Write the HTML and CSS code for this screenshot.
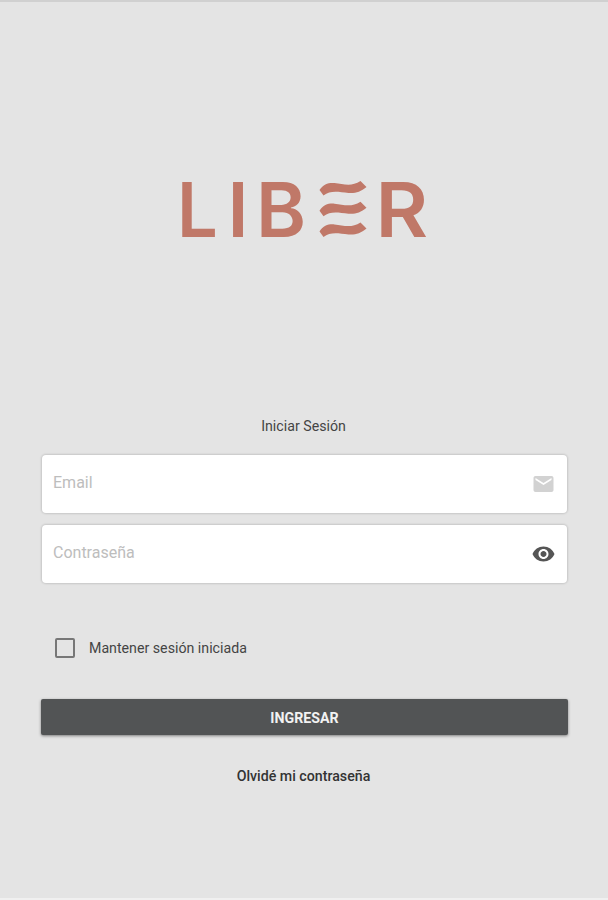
FILE: index.html
```html
<!DOCTYPE html>
<html lang="es">
<head>
  <meta charset="UTF-8" />
  <meta name="viewport" content="width=device-width, initial-scale=1.0" />
  <title>Liber - Iniciar Sesión</title>
  <link rel="stylesheet" href="styles.css">
</head>
<body>
  <main class="login">
    <div class="logo">
      <svg width="264" height="104" viewBox="-6.500 -20 264 104" role="img" aria-label="LIBER">
        <text class="logo-text" transform="translate(-1.500 59.500) scale(0.950 1)">L</text>
        <text class="logo-text" y="59.500" x="49 77.500">IB</text>
        <text class="logo-text" transform="translate(197 59.500) scale(1.060 1)">R</text>
        <g class="logo-waves">
          <path d="M141 13C145 7 150 5.500 156 6C165 7 173 10 182 4L188 10C182 15 177 16.500 170 16C160 15 152 13 145 18.500Z" />
          <path d="M141 33.700C145 27.700 150 26.200 156 26.700C165 27.700 173 30.700 182 24.700L188 30.700C182 35.700 177 37.200 170 36.700C160 35.700 152 33.700 145 39.200Z" />
          <path d="M141 54.400C145 48.400 150 46.900 156 47.400C165 48.400 173 51.400 182 45.400L188 51.400C182 56.400 177 57.900 170 57.400C160 56.400 152 54.400 145 59.900Z" />
        </g>
      </svg>
    </div>

    <form class="login-form">
      <h1 class="form-title">Iniciar Sesión</h1>

      <label class="field">
        <input type="email" placeholder="Email">
        <svg class="icon icon-mail" viewBox="0 0 24 24">
          <path d="M20 4H4c-1.100 0-2 .9-2 2v12c0 1.100.9 2 2 2h16c1.100 0 2-.9 2-2V6c0-1.100-.9-2-2-2zm0 4l-8 5-8-5V6l8 5 8-5v2z" />
        </svg>
      </label>

      <label class="field">
        <input type="password" placeholder="Contraseña">
        <svg class="icon icon-eye" viewBox="0 0 24 24">
          <path d="M12 4.500C7 4.500 2.730 7.610 1 12c1.730 4.390 6 7.500 11 7.500s9.270-3.110 11-7.500c-1.730-4.390-6-7.500-11-7.500zM12 17c-2.760 0-5-2.240-5-5s2.240-5 5-5 5 2.240 5 5-2.240 5-5 5zm0-8c-1.660 0-3 1.340-3 3s1.340 3 3 3 3-1.340 3-3-1.340-3-3-3z" />
        </svg>
      </label>

      <label class="remember">
        <input type="checkbox">
        <span>Mantener sesión iniciada</span>
      </label>

      <button type="button" class="submit-button">INGRESAR</button>
      <a href="#" class="forgot-link">Olvidé mi contraseña</a>
    </form>
  </main>
</body>
</html>
```

FILE: styles.css
```css
* {
  margin: 0;
  padding: 0;
  box-sizing: border-box;
}

body {
  font-family: Roboto, "Liberation Sans", sans-serif;
  background: #e4e4e4;
  color: #444;
}

.login {
  height: 900px;
  padding: 0 41px 0 40px;
  border-top: 2px solid #d0d0d0;
  border-bottom: 2px solid #f0f0f0;
}

.logo {
  display: flex;
  justify-content: center;
  padding-top: 155px;
}

.logo-text {
  font-family: Inter, sans-serif;
  font-size: 76px;
  font-weight: 600;
  fill: #c07868;
}

.logo-waves {
  fill: #c07868;
}

.login-form {
  display: flex;
  flex-direction: column;
  margin-top: 155px;
}

.form-title {
  font-size: 14.2px;
  line-height: 20px;
  font-weight: 400;
  text-align: center;
  margin-bottom: 19px;
}

.field {
  display: flex;
  align-items: center;
  height: 58px;
  margin: 0 0 12px 2px;
  padding: 0 11px;
  background: #fff;
  border-radius: 4px;
  box-shadow: 0 0 2px 1px rgba(0, 0, 0, 0.13);
}

.field input {
  flex: 1;
  border: none;
  outline: none;
  background: none;
  font-family: inherit;
  font-size: 16px;
  padding-bottom: 3px;
}

.field input::placeholder {
  color: #bdbdbd;
}

.icon {
  width: 25px;
  height: 24px;
}

.icon-mail {
  fill: #d2d2d2;
}

.icon-eye {
  fill: #555;
}

.remember {
  display: flex;
  align-items: center;
  gap: 14px;
  height: 20px;
  margin: 43px 0 0 15px;
  font-size: 14.2px;
}

.remember input {
  appearance: none;
  width: 20px;
  height: 20px;
  border: 2px solid #777;
  border-radius: 2px;
}

.submit-button {
  height: 36px;
  margin: 41px -1px 0 1px;
  padding-top: 1px;
  border: none;
  border-radius: 2px;
  background: #525455;
  color: #f2f2f2;
  font-family: inherit;
  font-size: 14.2px;
  font-weight: 700;
  box-shadow: 0 1px 3px rgba(0, 0, 0, 0.45);
}

.forgot-link {
  margin-top: 31px;
  font-size: 14.2px;
  line-height: 20px;
  font-weight: 500;
  text-align: center;
  text-decoration: none;
  color: #333;
}
```
